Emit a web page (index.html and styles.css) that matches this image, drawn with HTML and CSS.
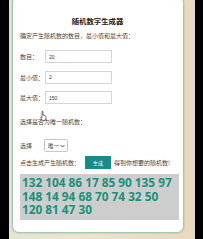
FILE: index.html
```html
<!DOCTYPE html>
<html lang="zh-CN">
<head>
  <meta charset="UTF-8">
  <meta name="viewport" content="width=device-width, initial-scale=1.0">
  <title>随机数字生成器</title>
  <link rel="stylesheet" href="styles.css">
</head>
<body>
  <div class="frame">
    <div class="card">
      <h1 class="title">随机数字生成器</h1>
      <p class="intro">确定产生随机数的数目，最小值和最大值：</p>

      <div class="field first">
        <label for="count">数目：</label>
        <input id="count" type="text" value="20">
      </div>
      <div class="field">
        <label for="min">最小值：</label>
        <input id="min" type="text" value="2">
      </div>
      <div class="field">
        <label for="max">最大值：</label>
        <input id="max" type="text" value="150">
      </div>

      <p class="question">选择是否为唯一随机数：</p>

      <div class="field pick">
        <label for="unique">选择</label>
        <div class="select">唯一
          <svg width="5" height="4" viewBox="0 0 5 4"><path d="M0.5 1 L2.5 3 L4.5 1" fill="none" stroke="#333" stroke-width="0.8"/></svg>
        </div>
      </div>

      <div class="action">
        <span>点击生成产生随机数：</span>
        <button class="go">生成</button>
        <span>得到你想要的随机数!</span>
      </div>

      <div class="result">132 104 86 17 85 90 135 97 148 14 94 68 70 74 32 50 120 81 47 30</div>

      <!-- mouse pointer left in the screenshot -->
      <svg class="cursor" width="7" height="10" viewBox="0 0 7 10">
        <path d="M2 0.5 L3 0.5 L3 4 L5.5 4.8 L6 6.5 L5 9.5 L2.5 9.5 L0.8 6.8 L1.2 6 L2 6.6 Z" fill="#fff" stroke="#222" stroke-width="0.6"/>
      </svg>
    </div>
  </div>
</body>
</html>
```

FILE: styles.css
```css
html, body {
  margin: 0;
  padding: 0;
}
body {
  background: #000;
  width: 203px;
  height: 239px;
  overflow: hidden;
  font-family: "Noto Sans CJK SC", "Noto Sans", sans-serif;
  color: #444;
}
.frame {
  margin: 0 8px 0 9px;
  height: 239px;
  background: linear-gradient(90deg, #e3e6d4 0%, #ece3cf 40%, #e8d9bf 100%);
  overflow: hidden;
}
.card {
  position: relative;
  box-sizing: border-box;
  margin: -4px 0 0 3px;
  width: 172px;
  height: 237px;
  padding: 19px 4px 0 7px;
  background: #fff;
  border: 1px solid #9fc9b0;
  border-radius: 7px;
  box-shadow: 0 0 2px rgba(70, 130, 90, 0.45);
}
.title {
  margin: 0;
  font-size: 7.4px;
  line-height: 10px;
  font-weight: bold;
  text-align: center;
  color: #222;
  padding-right: 4px;
}
.intro, .question {
  margin: 5px 0 0;
  font-size: 6px;
  line-height: 10px;
}
.question {
  margin-top: 13px;
}
.field {
  display: flex;
  align-items: center;
  margin-top: 7.5px;
  height: 13px;
  font-size: 6px;
}
.field.first {
  margin-top: 9px;
}
.field.pick {
  margin-top: 12px;
}
.field label {
  width: 25px;
  flex: none;
}
.field input {
  box-sizing: border-box;
  width: 67px;
  height: 13px;
  margin: 0;
  padding: 0 3px;
  border: 1px solid #d4d4d4;
  font-family: "Liberation Sans", sans-serif;
  font-size: 5px;
  color: #333;
  outline: none;
}
.select {
  box-sizing: border-box;
  width: 24px;
  height: 13px;
  margin-left: -1px;
  padding: 0 2px 0 3px;
  display: flex;
  align-items: center;
  justify-content: space-between;
  border: 1px solid #c8c8c8;
  border-radius: 2px;
  font-size: 5.5px;
}
.action {
  display: flex;
  align-items: center;
  height: 13px;
  margin-top: 4px;
  font-size: 6px;
}
.go {
  width: 26px;
  height: 13px;
  margin: 0 3px 0 5px;
  padding: 0;
  border: none;
  background: #168c8c;
  color: #fff;
  font-family: inherit;
  font-size: 5px;
}
.result {
  box-sizing: border-box;
  margin-top: 5px;
  width: 159px;
  height: 46px;
  padding: 2px 0 0 2px;
  background: #cdcdcd;
  color: #17917b;
  font-family: "Noto Sans", sans-serif;
  font-size: 11.8px;
  font-weight: bold;
  line-height: 13.5px;
}
.cursor {
  position: absolute;
  left: 27px;
  top: 114px;
}
```
